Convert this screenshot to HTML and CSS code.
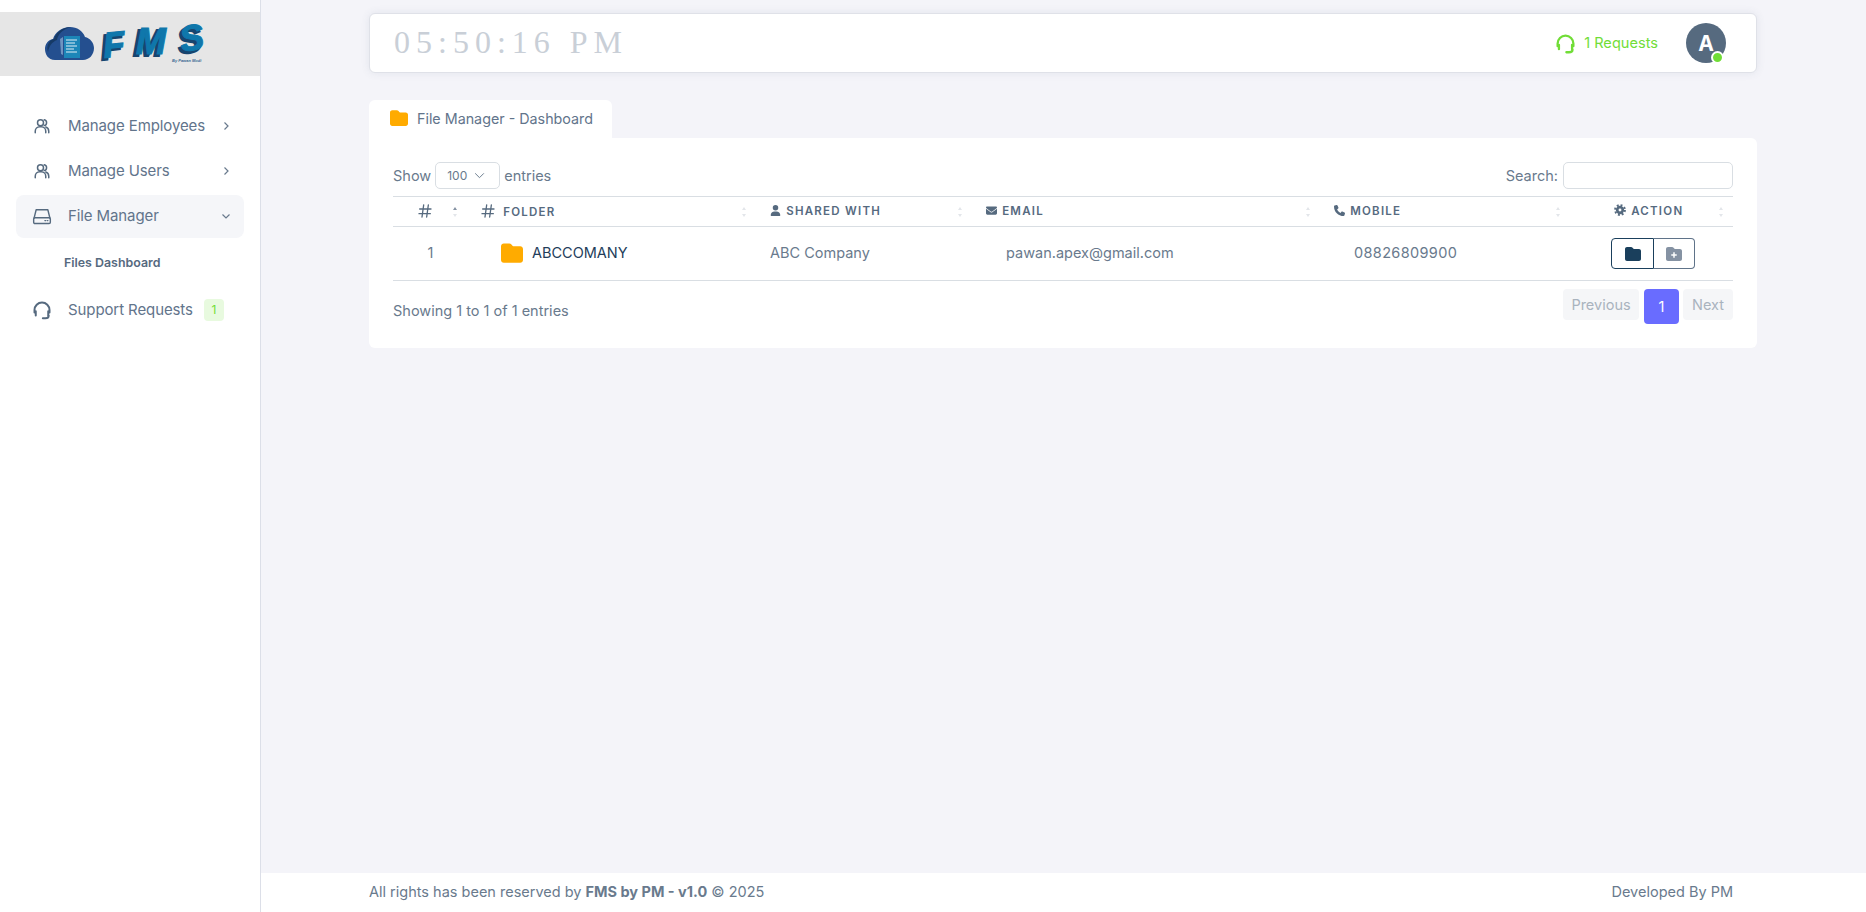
FILE: index.html
```html
<!DOCTYPE html>
<html lang="en">
<head>
<meta charset="utf-8">
<title>FMS - File Manager</title>
<link rel="stylesheet" href="styles.css">
</head>
<body>
<aside class="sidebar">
  <div class="brand">
    <svg class="logo" viewBox="0 -6 170 62" width="170" height="62">
      <path d="M10 41C3 41 0 35 0 30c0-5 3-9 8-10 2-7 9-12 17-12 7 0 13 4 15 10 5 1 9 6 9 11 0 7-5 12-11 12z" fill="#244f8f"/>
      <path d="M3 33c-2-6 1-12 6-13 2-7 9-12 17-12-8 2-13 7-14 13-5 2-8 6-9 12z" fill="#163a66"/>
      <rect x="19" y="17" width="16" height="22" fill="#1c86b8"/>
      <path d="M21 21h11M21 24h9M21 27h11M21 30h8M21 33h11" stroke="#dfeef6" stroke-width="1.2"/>
      <path d="M15 20l3-2v18l-2-1z" fill="#6f93bf"/>
      <g>
        <text class="logo-shadow" x="55" y="40" transform="rotate(-6 68 27)">F</text>
        <text class="logo-front" x="58" y="38" transform="rotate(-6 68 27)">F</text>
        <text class="logo-shadow" x="88" y="37">M</text>
        <text class="logo-front" x="91" y="35">M</text>
        <text class="logo-shadow" x="132" y="33" transform="rotate(-10 147 20)">S</text>
        <text class="logo-front" x="135" y="31" transform="rotate(-10 147 20)">S</text>
      </g>
      <text class="logo-by" x="127" y="43">By Pawan Modi</text>
    </svg>
  </div>
  <nav class="menu">
    <a class="menu-item">
      <svg class="menu-icon users" viewBox="0 0 24 24"><circle cx="10" cy="7.5" r="4"/><path d="M3 21v-2a6 6 0 0 1 6-6h2a6 6 0 0 1 6 6v2"/><path d="M15 3.6a4 4 0 0 1 0 7.8M21 21v-2a6 6 0 0 0-4-5.6"/></svg>
      <span class="menu-label">Manage Employees</span>
      <svg class="chev" viewBox="0 0 24 24"><path d="M9 5l7 7-7 7"/></svg>
    </a>
    <a class="menu-item">
      <svg class="menu-icon users" viewBox="0 0 24 24"><circle cx="10" cy="7.5" r="4"/><path d="M3 21v-2a6 6 0 0 1 6-6h2a6 6 0 0 1 6 6v2"/><path d="M15 3.6a4 4 0 0 1 0 7.8M21 21v-2a6 6 0 0 0-4-5.6"/></svg>
      <span class="menu-label">Manage Users</span>
      <svg class="chev" viewBox="0 0 24 24"><path d="M9 5l7 7-7 7"/></svg>
    </a>
    <a class="menu-item active">
      <svg class="menu-icon" viewBox="0 0 24 24"><path d="M2.5 14.5L5 4.5h14l2.5 10"/><rect x="2" y="14" width="20" height="7" rx="1.5"/><path d="M15.5 17.5h1M18.5 17.5h.5"/></svg>
      <span class="menu-label">File Manager</span>
      <svg class="chev down" viewBox="0 0 24 24"><path d="M5 9l7 7 7-7"/></svg>
    </a>
    <a class="submenu-item">Files Dashboard</a>
    <a class="menu-item support">
      <svg class="menu-icon thick" viewBox="0 0 24 24"><path d="M3 15v-3a9 9 0 0 1 18 0v3"/><path d="M4.5 13.5v5M19.5 13.5v5"/><path d="M20 19c0 2-2 3-4 3h-3"/></svg>
      <span class="menu-label">Support Requests</span>
      <span class="badge">1</span>
    </a>
  </nav>
</aside>

<div class="main">
  <div class="content">
    <header class="topbar">
      <div class="clock">05:50:16 PM</div>
      <div class="topbar-right">
        <a class="requests">
          <svg class="req-icon" viewBox="0 0 24 24"><path d="M3 15v-3a9 9 0 0 1 18 0v3"/><path d="M4.5 13.5v5M19.5 13.5v5"/><path d="M20 19c0 2-2 3-4 3h-3"/></svg>
          <span>1 Requests</span>
        </a>
        <div class="avatar">A<span class="status"></span></div>
      </div>
    </header>

    <div class="tab">
      <svg class="ic-folder tab-folder" viewBox="0 0 512 512"><path d="M64 480H448c35.3 0 64-28.7 64-64V160c0-35.3-28.7-64-64-64H288c-10.1 0-19.6-4.7-25.6-12.8L243.2 57.6C231.1 41.5 212.1 32 192 32H64C28.7 32 0 60.7 0 96V416c0 35.3 28.7 64 64 64z"/></svg>
      <span>File Manager - Dashboard</span>
    </div>

    <section class="card">
      <div class="controls">
        <label class="length">Show <span class="select">100<svg viewBox="0 0 24 24"><path d="M4 8l8 8 8-8"/></svg></span> entries</label>
        <label class="search">Search: <span class="search-box"></span></label>
      </div>
      <table class="grid">
        <thead>
          <tr>
            <th class="col-num sort-active"><svg class="th-hash big" viewBox="0 0 24 24"><path d="M4 9h17M3 16h17M10 3L7.5 21M17 3l-2.5 18"/></svg></th>
            <th class="col-folder"><svg class="th-hash big" viewBox="0 0 24 24"><path d="M4 9h17M3 16h17M10 3L7.5 21M17 3l-2.5 18"/></svg> Folder</th>
            <th class="col-shared"><svg class="th-ic" viewBox="0 0 448 512"><path d="M224 256A128 128 0 1 0 224 0a128 128 0 1 0 0 256zm-45.7 48C79.8 304 0 383.8 0 482.3C0 498.7 13.3 512 29.7 512H418.3c16.4 0 29.7-13.3 29.7-29.7C448 383.8 368.2 304 269.7 304H178.3z"/></svg> Shared With</th>
            <th class="col-email"><svg class="th-ic" viewBox="0 0 512 512"><path d="M48 64C21.5 64 0 85.5 0 112c0 15.1 7.1 29.3 19.2 38.4L236.8 313.6c11.4 8.5 27 8.5 38.4 0L492.8 150.4c12.1-9.1 19.2-23.3 19.2-38.4c0-26.5-21.5-48-48-48H48zM0 176V384c0 35.3 28.7 64 64 64H448c35.3 0 64-28.7 64-64V176L294.4 339.2c-22.8 17.1-54 17.1-76.8 0L0 176z"/></svg> Email</th>
            <th class="col-mobile"><svg class="th-ic" viewBox="0 0 512 512"><path d="M164.9 24.6c-7.7-18.6-28-28.5-47.4-23.2l-88 24C12.1 30.2 0 46 0 64C0 311.4 200.6 512 448 512c18 0 33.8-12.1 38.6-29.5l24-88c5.3-19.4-4.6-39.7-23.2-47.4l-96-40c-16.3-6.8-35.2-2.1-46.3 11.6L304.7 368C234.3 334.7 177.3 277.7 144 207.3L193.3 167c13.7-11.2 18.4-30 11.6-46.3l-40-96z"/></svg> Mobile</th>
            <th class="col-action"><svg class="th-ic gear" viewBox="0 0 24 24"><circle class="gear-teeth" cx="12" cy="12" r="9.8"/><circle class="gear-ring" cx="12" cy="12" r="5.6"/></svg> Action</th>
          </tr>
        </thead>
        <tbody>
          <tr>
            <td class="col-num">1</td>
            <td class="col-folder"><span class="folder-cell"><svg class="ic-folder row-folder" viewBox="0 0 512 512"><path d="M64 480H448c35.3 0 64-28.7 64-64V160c0-35.3-28.7-64-64-64H288c-10.1 0-19.6-4.7-25.6-12.8L243.2 57.6C231.1 41.5 212.1 32 192 32H64C28.7 32 0 60.7 0 96V416c0 35.3 28.7 64 64 64z"/></svg><span class="folder-name">ABCCOMANY</span></span></td>
            <td class="col-shared">ABC Company</td>
            <td class="col-email">pawan.apex@gmail.com</td>
            <td class="col-mobile">08826809900</td>
            <td class="col-action">
              <div class="btn-group">
                <button class="btn btn-open"><svg viewBox="0 0 512 512"><path d="M64 480H448c35.3 0 64-28.7 64-64V160c0-35.3-28.7-64-64-64H288c-10.1 0-19.6-4.7-25.6-12.8L243.2 57.6C231.1 41.5 212.1 32 192 32H64C28.7 32 0 60.7 0 96V416c0 35.3 28.7 64 64 64z"/></svg></button>
                <button class="btn btn-add"><svg viewBox="0 0 512 512"><path fill-rule="evenodd" d="M64 480H448c35.3 0 64-28.7 64-64V160c0-35.3-28.7-64-64-64H288c-10.1 0-19.6-4.7-25.6-12.8L243.2 57.6C231.1 41.5 212.1 32 192 32H64C28.7 32 0 60.7 0 96V416c0 35.3 28.7 64 64 64zM232 376V312H168V264h64V200h48v64h64v48H280v64z"/></svg></button>
              </div>
            </td>
          </tr>
        </tbody>
      </table>
      <div class="footer-row">
        <div class="info">Showing 1 to 1 of 1 entries</div>
        <div class="pager">
          <span class="page prev">Previous</span>
          <span class="page current">1</span>
          <span class="page next">Next</span>
        </div>
      </div>
    </section>
  </div>
  <footer class="footer">
    <div>All rights has been reserved by <b>FMS by PM - v1.0</b> © 2025</div>
    <div>Developed By PM</div>
  </footer>
</div>
</body>
</html>
```
FILE: styles.css
```css
* { box-sizing: border-box; }
html, body { margin: 0; height: 100%; }
body {
  display: flex;
  height: 912px;
  overflow: hidden;
  background: #f4f4f9;
  color: #697a8d;
  font-family: Inter, "Liberation Sans", sans-serif;
  font-size: 14.5px;
}
.sidebar {
  width: 261px;
  flex: none;
  background: #fff;
  border-right: 1px solid #dcdfe8;
  padding-top: 12px;
}
.brand {
  height: 64px;
  background: #e6e6e6;
  display: flex;
  align-items: center;
  justify-content: center;
}
.logo { display: block; }
.logo-shadow, .logo-front {
  font-family: "Liberation Sans", sans-serif;
  font-weight: 700;
  font-style: italic;
  font-size: 36px;
}
.logo-shadow { fill: #17456f; stroke: #17456f; stroke-width: 2; }
.logo-front { fill: #0f77ab; stroke: #0f77ab; stroke-width: 1; }
.logo-by {
  font-family: "Liberation Sans", sans-serif;
  font-style: italic;
  font-weight: 700;
  font-size: 4px;
  fill: #3a6a94;
}
.menu {
  display: flex;
  flex-direction: column;
  padding: 28px 16px 0;
}
.menu-item {
  height: 43px;
  margin-bottom: 2px;
  display: flex;
  align-items: center;
  padding-left: 16px;
  border-radius: 8px;
  font-size: 15px;
  letter-spacing: -.1px;
  color: #62748b;
}
.menu-item.active {
  background: #f5f6f9;
  margin-top: 1px;
  padding-bottom: 2px;
}
.menu-icon {
  width: 20px;
  height: 20px;
  margin-right: 16px;
  flex: none;
  fill: none;
  stroke: #566a7f;
  stroke-width: 1.7;
  stroke-linecap: round;
  stroke-linejoin: round;
}
.menu-icon.users {
  width: 18px;
  height: 18px;
  margin-left: 1px;
  margin-right: 17px;
  stroke-width: 2;
}
.menu-icon.thick { stroke-width: 2.4; }
.menu-label { white-space: nowrap; }
.chev {
  width: 12px;
  height: 12px;
  margin-left: auto;
  margin-right: 12px;
  fill: none;
  stroke: #697a8d;
  stroke-width: 2.4;
}
.submenu-item {
  height: 44px;
  display: flex;
  align-items: center;
  padding-left: 48px;
  font-size: 12.4px;
  font-weight: 600;
  color: #566a7f;
}
.support { margin-top: 4px; }
.badge {
  width: 20px;
  height: 22px;
  margin-left: 11px;
  border-radius: 4px;
  background: #e8fadf;
  color: #71dd37;
  font-size: 12px;
  display: flex;
  align-items: center;
  justify-content: center;
}
.main {
  flex: 1;
  min-width: 0;
  display: flex;
  flex-direction: column;
}
.content {
  flex: 1;
  padding: 13px 109px 0 108px;
}
.topbar {
  height: 60px;
  background: #fff;
  border: 1px solid #dfe1e8;
  border-radius: 6px;
  box-shadow: 0 0 8px rgba(67, 89, 113, .1);
  display: flex;
  align-items: center;
  justify-content: space-between;
  padding: 0 30px 0 24px;
}
.clock {
  font-family: "Liberation Serif", serif;
  font-size: 32px;
  letter-spacing: 6px;
  color: #c9cfd7;
  white-space: nowrap;
  padding-bottom: 2px;
}
.topbar-right { display: flex; align-items: center; }
.requests {
  display: flex;
  align-items: center;
  gap: 8px;
  color: #71dd37;
  font-size: 14.6px;
  margin-right: 28px;
}
.req-icon {
  width: 21px;
  height: 21px;
  fill: none;
  stroke: #71dd37;
  stroke-width: 2.6;
  stroke-linecap: round;
}
.avatar {
  position: relative;
  width: 40px;
  height: 40px;
  border-radius: 50%;
  background: #566a7f;
  color: #fff;
  font-weight: 700;
  font-size: 21px;
  display: flex;
  align-items: center;
  justify-content: center;
}
.status {
  position: absolute;
  right: 2px;
  bottom: -1px;
  width: 13px;
  height: 13px;
  border-radius: 50%;
  background: #71dd37;
  border: 2px solid #fff;
}
.tab {
  width: 243px;
  height: 38px;
  margin-top: 27px;
  background: #fff;
  border-radius: 6px 6px 0 0;
  display: flex;
  align-items: center;
  padding: 0 0 2px 21px;
  gap: 9px;
  color: #62748b;
  font-size: 14.3px;
  white-space: nowrap;
}
.ic-folder { fill: #ffab00; flex: none; }
.tab-folder { width: 18px; height: 18px; }
.card {
  height: 210px;
  background: #fff;
  border-radius: 0 6px 6px 6px;
  padding: 24px 24px 0;
}
.controls {
  height: 27px;
  display: flex;
  justify-content: space-between;
  align-items: center;
  color: #697a8d;
}
.length, .search { display: flex; align-items: center; gap: 4px; }
.length { line-height: 25px; }
.search { gap: 5px; line-height: 25px; }
.select {
  width: 65px;
  height: 27px;
  border: 1px solid #d9dee3;
  border-radius: 5px;
  display: flex;
  align-items: center;
  gap: 6px;
  padding-left: 11px;
  font-size: 12px;
}
.select svg {
  width: 13px;
  height: 13px;
  fill: none;
  stroke: #697a8d;
  stroke-width: 1.8;
}
.search-box {
  width: 170px;
  height: 27px;
  border: 1px solid #d9dee3;
  border-radius: 5px;
  display: block;
}
.grid {
  width: 1340px;
  margin-top: 7px;
  border-collapse: collapse;
  table-layout: fixed;
}
.grid th {
  position: relative;
  height: 30px;
  padding: 0 0 2px 14px;
  border-top: 1px solid #d9dee3;
  border-bottom: 1px solid #d9dee3;
  text-align: left;
  font-size: 11.5px;
  font-weight: 600;
  letter-spacing: 1.25px;
  text-transform: uppercase;
  color: #566a7f;
  white-space: nowrap;
}
.grid th::before, .grid th::after {
  content: "";
  position: absolute;
  right: 10px;
  border-left: 2.5px solid transparent;
  border-right: 2.5px solid transparent;
}
.grid th.col-num::before, .grid th.col-num::after { right: 8px; }
.grid th::before { top: 10px; border-bottom: 3px solid #e3e6ea; }
.grid th::after { bottom: 9px; border-top: 3px solid #e3e6ea; }
.grid th.sort-active::before { border-bottom-color: #8592a3; }
.grid td {
  height: 54px;
  padding: 0 0 2px 14px;
  border-bottom: 1px solid #d9dee3;
  color: #697a8d;
  white-space: nowrap;
}
.grid .col-num { width: 72px; text-align: center; padding: 0 0 2px 3px; }
.grid th.col-num { padding: 0 5px 2px 0; }
.grid .col-folder { width: 291px; }
.grid th.col-folder { padding-left: 15px; }
.grid td.col-folder { padding-left: 36px; }
.grid .col-shared { width: 216px; }
.grid .col-email { width: 348px; }
.grid td.col-email { padding-left: 34px; }
.grid .col-mobile { width: 250px; }
.grid td.col-mobile { padding-left: 34px; letter-spacing: .35px; }
.grid .col-action { width: 163px; }
.grid th.col-action { padding-left: 44px; }
.grid td.col-action { padding: 0 0 0 41px; }
.th-hash, .th-ic {
  display: inline-block;
  vertical-align: -1.5px;
  fill: #566a7f;
  margin-right: 1px;
}
.th-hash {
  fill: none;
  stroke: #566a7f;
  stroke-width: 2;
  stroke-linecap: round;
}
.th-hash.big { width: 16px; height: 16px; vertical-align: -3px; margin-right: 3px; }
.th-ic { width: 11px; height: 11px; }
.gear { width: 12px; height: 12px; }
.gear-teeth {
  fill: none;
  stroke: #566a7f;
  stroke-width: 4;
  stroke-dasharray: 3.8 3.9;
}
.gear-ring { fill: none; stroke: #566a7f; stroke-width: 5.4; }
.folder-cell { display: flex; align-items: center; gap: 9px; }
.row-folder { width: 22px; height: 22px; }
.folder-name { color: #233d5a; }
.btn-group { display: flex; width: 84px; height: 31px; }
.btn {
  padding: 0;
  background: #fff;
  display: flex;
  align-items: center;
  justify-content: center;
  height: 31px;
}
.btn svg { width: 16px; height: 16px; }
.btn-open {
  width: 43px;
  border: 1px solid #1a3f5c;
  border-radius: 4px 0 0 4px;
}
.btn-open svg { fill: #1a3f5c; }
.btn-add {
  width: 41px;
  border: 1px solid #5f7389;
  border-left: 0;
  border-radius: 0 4px 4px 0;
}
.btn-add svg { fill: #8592a3; }
.footer-row {
  display: flex;
  justify-content: space-between;
  align-items: flex-start;
  padding-top: 8px;
}
.info { padding-top: 13px; }
.pager { display: flex; align-items: flex-start; gap: 4px; }
.page {
  height: 31px;
  background: #f5f6f8;
  border-radius: 4px;
  color: #a9b3be;
  display: flex;
  align-items: center;
  justify-content: center;
}
.page.prev { width: 76px; margin-right: 1px; }
.page.next { width: 50px; }
.page.current {
  width: 35px;
  height: 35px;
  background: #696cff;
  color: #fff;
}
.footer {
  height: 39px;
  flex: none;
  background: #fff;
  display: flex;
  align-items: center;
  justify-content: space-between;
  padding: 0 133px 2px 108px;
  color: #697a8d;
}
```
